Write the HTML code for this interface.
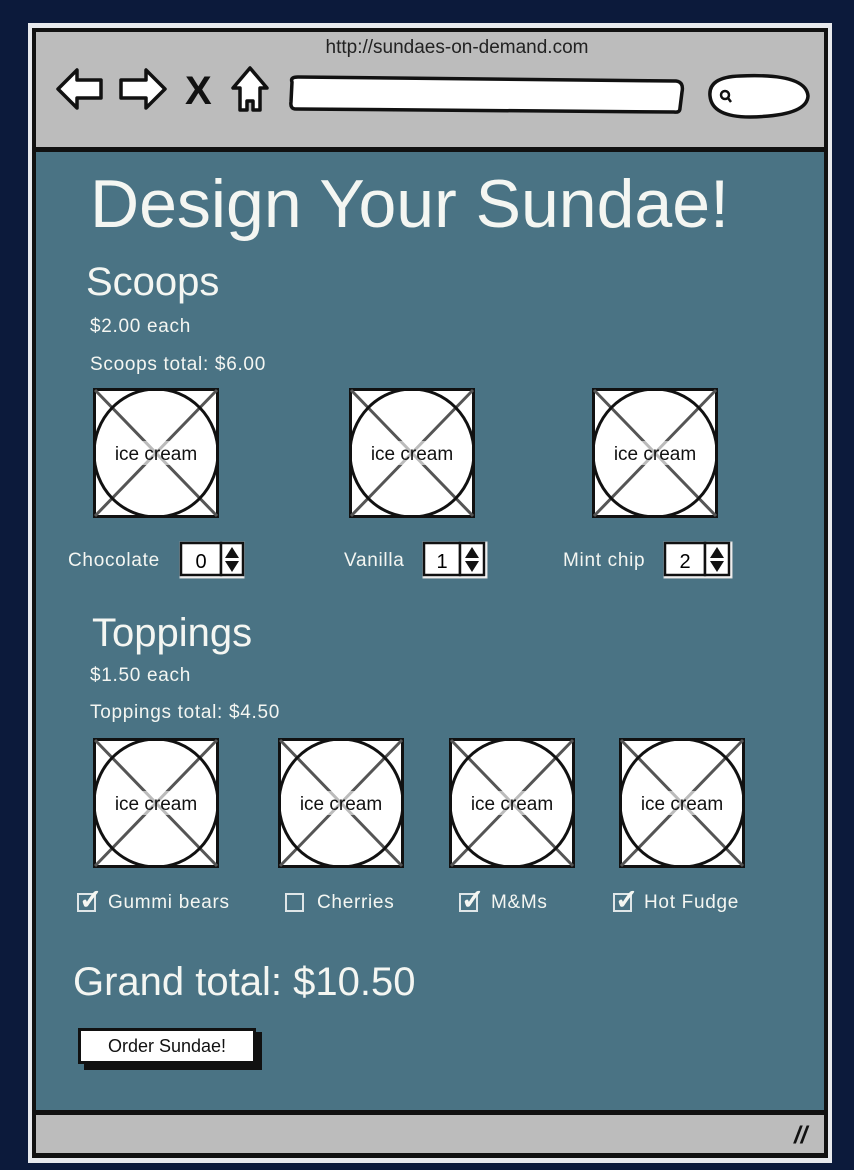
<!DOCTYPE html>
<html><head><meta charset="utf-8"><style>
body{margin:0;width:854px;height:1170px;background:#0c1a3b;position:relative;overflow:hidden;font-family:"Liberation Sans",sans-serif}
.a{position:absolute}
.w{color:#f4f6f2;white-space:nowrap}
.s{font-size:19px;letter-spacing:0.7px}
.img{position:absolute;width:126px;height:130px}
.cb{position:absolute;width:19px;height:19px;border:2px solid #dfe6e8;box-sizing:border-box}
.ck{position:absolute;color:#f4f6f2;font-size:28px;font-weight:bold;line-height:1}
</style></head><body>
<div class="a" style="left:28px;top:23px;width:804px;height:1140px;background:#e8eaee"></div>
<div class="a" style="left:32px;top:28px;width:796px;height:1130px;background:#111"></div>
<div class="a" style="left:36px;top:32px;width:788px;height:115px;background:#bcbcbc"></div>
<div class="a" style="left:36px;top:152px;width:788px;height:958px;background:#4a7384"></div>
<div class="a" style="left:36px;top:1115px;width:788px;height:38px;background:#bcbcbc"></div>
<div class="a" style="left:0;top:37px;width:854px;text-align:center;font-size:19px;color:#222;padding-left:30px">http://sundaes-on-demand.com</div>
<svg class="a" style="left:50px;top:60px" width="760" height="60" viewBox="0 0 760 60">
<g fill="#fff" stroke="#111" stroke-width="3.5" stroke-linejoin="round">
<path d="M8 29 L27 10 L27 20 L51 20 L51 38 L27 38 L27 48 Z"/>
<path d="M115 29 L96 10 L96 20 L71 20 L71 38 L96 38 L96 48 Z"/>
<path d="M200 8 L183 28 L190 28 L190 50 L197 50 L197 41 L203 41 L203 50 L210 50 L210 28 L217 28 Z"/>
<path d="M242 22 Q240 17 248 17 L626 21 Q634 22 632 32 L630 48 Q630 53 624 52 L246 49 Q240 49 241 42 Z"/>
<path d="M660 36 Q658 17 690 16 Q756 13 758 36 Q757 56 700 57 Q662 57 660 36 Z"/>
</g>
<text x="135" y="44" font-family="Liberation Sans" font-weight="bold" font-size="40" fill="#111">X</text>
<circle cx="675" cy="35" r="4" fill="none" stroke="#111" stroke-width="2.5"/><line x1="678" y1="38" x2="681" y2="42" stroke="#111" stroke-width="2.5"/>
</svg>
<div class="a w" style="left:90px;top:165px;font-size:68px">Design Your Sundae!</div>
<div class="a w" style="left:86px;top:260px;font-size:40px">Scoops</div>
<div class="a w s" style="left:90px;top:316px">$2.00 each</div>
<div class="a w s" style="left:90px;top:354px">Scoops total: $6.00</div>
<div class="a w" style="left:92px;top:611px;font-size:40px">Toppings</div>
<div class="a w s" style="left:90px;top:665px">$1.50 each</div>
<div class="a w s" style="left:90px;top:702px">Toppings total: $4.50</div>
<div class="a w" style="left:73px;top:960px;font-size:40px">Grand total: $10.50</div>

<svg width="0" height="0" style="position:absolute"><defs><g id="ic">
<rect x="1.5" y="1.5" width="123" height="127" fill="#fff" stroke="#111" stroke-width="3"/>
<line x1="2" y1="2" x2="124" y2="128" stroke="#555" stroke-width="3"/><line x1="124" y1="2" x2="2" y2="128" stroke="#555" stroke-width="3"/>
<ellipse cx="63" cy="65" rx="62" ry="64" fill="none" stroke="#111" stroke-width="3"/>
<rect x="12" y="53" width="102" height="24" fill="#fff" opacity="0.6"/>
<text x="63" y="72" text-anchor="middle" font-family="Liberation Sans" font-size="19" fill="#111">ice cream</text></g></defs></svg>
<svg class="img" style="left:93px;top:388px"><use href="#ic"/></svg>
<svg class="img" style="left:349px;top:388px"><use href="#ic"/></svg>
<svg class="img" style="left:592px;top:388px"><use href="#ic"/></svg>
<svg class="img" style="left:93px;top:738px"><use href="#ic"/></svg>
<svg class="img" style="left:278px;top:738px"><use href="#ic"/></svg>
<svg class="img" style="left:449px;top:738px"><use href="#ic"/></svg>
<svg class="img" style="left:619px;top:738px"><use href="#ic"/></svg>

<div class="a w s" style="left:68px;top:550px">Chocolate</div>
<div class="a w s" style="left:344px;top:550px">Vanilla</div>
<div class="a w s" style="left:563px;top:550px">Mint chip</div>
<svg class="a" style="left:179px;top:541px" width="66" height="38"><rect x="1" y="1" width="64" height="36" fill="#fff" stroke="#ddd"/><rect x="2" y="2" width="40" height="32" fill="#fff" stroke="#111" stroke-width="2.5"/><rect x="42" y="2" width="22" height="32" fill="#fff" stroke="#111" stroke-width="2.5"/><text x="22" y="27" text-anchor="middle" font-size="20" font-family="Liberation Sans">0</text><path d="M53 6 L60 17 L46 17 Z M53 31 L60 20 L46 20 Z" fill="#111"/></svg>
<svg class="a" style="left:422px;top:541px" width="66" height="38"><rect x="1" y="1" width="64" height="36" fill="#fff" stroke="#ddd"/><rect x="2" y="2" width="36" height="32" fill="#fff" stroke="#111" stroke-width="2.5"/><rect x="38" y="2" width="24" height="32" fill="#fff" stroke="#111" stroke-width="2.5"/><text x="20" y="27" text-anchor="middle" font-size="20" font-family="Liberation Sans">1</text><path d="M50 6 L57 17 L43 17 Z M50 31 L57 20 L43 20 Z" fill="#111"/></svg>
<svg class="a" style="left:663px;top:541px" width="70" height="38"><rect x="1" y="1" width="68" height="36" fill="#fff" stroke="#ddd"/><rect x="2" y="2" width="40" height="32" fill="#fff" stroke="#111" stroke-width="2.5"/><rect x="42" y="2" width="24" height="32" fill="#fff" stroke="#111" stroke-width="2.5"/><text x="22" y="27" text-anchor="middle" font-size="20" font-family="Liberation Sans">2</text><path d="M54 6 L61 17 L47 17 Z M54 31 L61 20 L47 20 Z" fill="#111"/></svg>

<div class="cb" style="left:77px;top:893px"></div><div class="ck" style="left:79px;top:886px">✓</div>
<div class="a w s" style="left:108px;top:892px">Gummi bears</div>
<div class="cb" style="left:285px;top:893px"></div>
<div class="a w s" style="left:317px;top:892px">Cherries</div>
<div class="cb" style="left:459px;top:893px"></div><div class="ck" style="left:461px;top:886px">✓</div>
<div class="a w s" style="left:491px;top:892px">M&amp;Ms</div>
<div class="cb" style="left:613px;top:893px"></div><div class="ck" style="left:615px;top:886px">✓</div>
<div class="a w s" style="left:644px;top:892px">Hot Fudge</div>

<div class="a" style="left:84px;top:1032px;width:178px;height:38px;background:#111"></div>
<div class="a" style="left:78px;top:1028px;width:178px;height:36px;background:#111"></div>
<div class="a" style="left:81px;top:1031px;width:172px;height:30px;background:#fff;font-size:18px;color:#111;line-height:30px;text-align:center">Order Sundae!</div>
<div class="a" style="left:794px;top:1122px;font-size:24px;font-weight:bold;color:#111;font-style:italic">//</div>
</body></html>
